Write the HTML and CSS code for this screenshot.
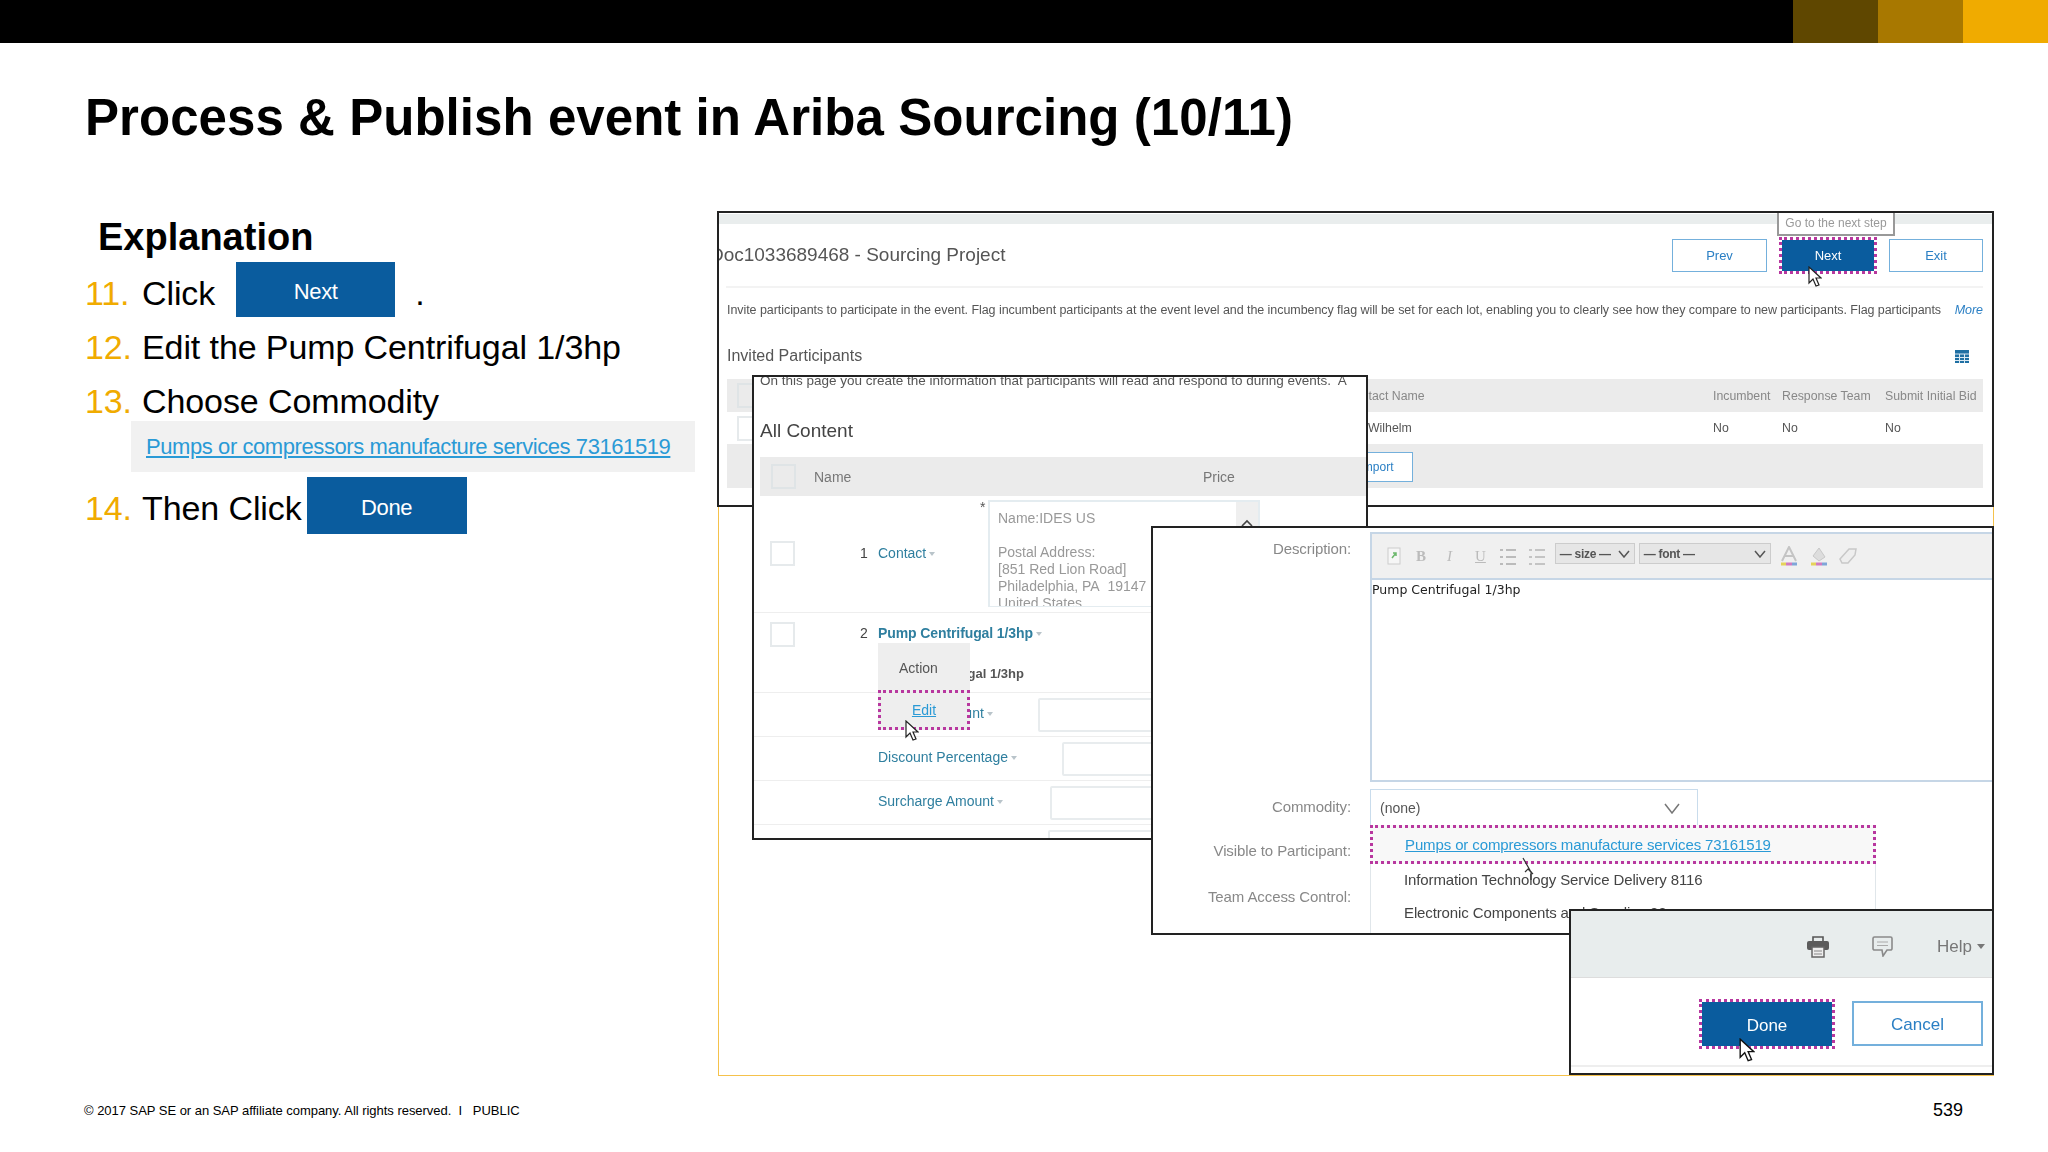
FILE: index.html
```html
<!DOCTYPE html>
<html lang="en">
<head>
    <meta charset="UTF-8">
    <title>Process &amp; Publish event in Ariba Sourcing (10/11)</title>
    <link rel="stylesheet" href="styles.css">
</head>
<body>
    <div class="slide">
        <div class="topbar">
            <div class="topbar-fill"></div>
            <div class="topbar-seg seg-dark"></div>
            <div class="topbar-seg seg-mid"></div>
            <div class="topbar-seg seg-light"></div>
        </div>

        <h1 class="slide-title">Process &amp; Publish event in Ariba Sourcing (10/11)</h1>

        <div class="explain">
            <h2>Explanation</h2>
            <div class="step">
                <span class="step-num">11.</span><span class="step-text">Click</span>
                <span class="step-btn step-btn-next">Next</span><span class="step-dot">.</span>
            </div>
            <div class="step"><span class="step-num">12.</span><span class="step-text">Edit the Pump Centrifugal 1/3hp</span></div>
            <div class="step"><span class="step-num">13.</span><span class="step-text">Choose Commodity</span></div>
            <div class="step-link"><a>Pumps or compressors manufacture services 73161519</a></div>
            <div class="step step-last">
                <span class="step-num">14.</span><span class="step-text">Then Click</span>
                <span class="step-btn step-btn-done">Done</span>
            </div>
        </div>

        <!-- screenshots, stacked like windows -->
        <div class="yellow-frame"></div>

        <div class="window win-project">
            <div class="strip"></div>
            <div class="project-head">
                <div class="project-title">Doc1033689468 - Sourcing Project</div>
                <div class="project-btns">
                    <span class="btn-outline btn-prev">Prev</span>
                    <span class="btn-solid btn-next">Next</span>
                    <span class="btn-outline btn-exit">Exit</span>
                </div>
            </div>
            <div class="project-rule"></div>
            <div class="invite-row">
                <span>Invite participants to participate in the event. Flag incumbent participants at the event level and the incumbency flag will be set for each lot, enabling you to clearly see how they compare to new participants. Flag participants</span>
                <em>More</em>
            </div>
            <div class="invited-head">
                <span>Invited Participants</span>
                <svg width="14" height="13" viewBox="0 0 14 13"><rect width="14" height="13" fill="#1f6fa3"/><path d="M0 4h14M0 7.500h14M0 10.500h14M4.500 4v9M9.500 4v9" stroke="#dbe9f2" stroke-width="1"/></svg>
            </div>
            <div class="part-table">
                <div class="part-row part-header">
                    <span class="part-first"><i class="checkbox"></i></span>
                    <span>Contact Name</span><span>Incumbent</span><span>Response Team</span><span>Submit Initial Bid</span>
                </div>
                <div class="part-row part-body">
                    <span class="part-first"><i class="checkbox"></i></span>
                    <span class="part-name">Wilhelm</span><span>No</span><span>No</span><span>No</span>
                </div>
                <div class="part-foot"><span class="btn-outline btn-import">Import</span></div>
            </div>
            <div class="tooltip">Go to the next step</div>
        </div>

        <div class="window win-content">
            <div class="content-intro">On this page you create the information that participants will read and respond to during events.&nbsp; A</div>
            <div class="content-title">All Content</div>
            <div class="content-header">
                <span class="content-check"><i class="checkbox"></i></span>
                <span class="content-name">Name</span>
                <span>Price</span>
            </div>
            <div class="content-row row-contact">
                <i class="checkbox"></i>
                <span class="row-num">1</span>
                <span class="row-label">Contact<b class="caret"></b></span>
                <span class="row-star">*</span>
                <div class="address">
                    <p>Name:IDES US</p>
                    <p class="address-gap">Postal Address:</p>
                    <p>[851 Red Lion Road]</p>
                    <p>Philadelphia, PA&nbsp; 19147</p>
                    <p>United States</p>
                    <div class="address-scroll">
                        <svg width="12" height="8" viewBox="0 0 12 8"><path d="M1 7l5-5 5 5" fill="none" stroke="#444" stroke-width="1.600"/></svg>
                    </div>
                </div>
            </div>
            <div class="content-row row-pump">
                <i class="checkbox"></i>
                <span class="row-num">2</span>
                <div class="pump-text">
                    <span class="row-label row-label-bold">Pump Centrifugal 1/3hp<b class="caret"></b></span>
                    <span class="pump-sub">Pump Centrifugal 1/3hp</span>
                </div>
            </div>
            <div class="field-row">
                <span class="row-label">Discount Amount<b class="caret"></b></span>
                <span class="field-input input-a"></span>
            </div>
            <div class="field-row">
                <span class="row-label">Discount Percentage<b class="caret"></b></span>
                <span class="field-input input-b"></span>
            </div>
            <div class="field-row">
                <span class="row-label">Surcharge Amount<b class="caret"></b></span>
                <span class="field-input input-c"></span>
            </div>
            <div class="field-row">
                <span class="row-label">Surcharge Percentage</span>
                <span class="field-input input-d"></span>
            </div>
            <div class="action-menu">
                <div class="action-title">Action</div>
                <div class="action-edit"><a>Edit</a></div>
            </div>
        </div>

        <div class="window win-desc">
            <div class="desc-labels">
                <div class="desc-label label-description">Description:</div>
                <div class="desc-label label-commodity">Commodity:</div>
                <div class="desc-label label-visible">Visible to Participant:</div>
                <div class="desc-label label-team">Team Access Control:</div>
            </div>
            <div class="desc-main">
                <div class="editor">
                    <div class="editor-bar">
                        <svg class="tool tool-first" width="14" height="18" viewBox="0 0 14 18"><rect x="1" y="1" width="12" height="16" fill="#f6f6f6" stroke="#ccc"/><path d="M5 11l4-5M6 6h3v3" fill="none" stroke="#6cb86c" stroke-width="1.500"/></svg>
                        <span class="tool tool-b">B</span>
                        <span class="tool tool-i">I</span>
                        <span class="tool tool-u">U</span>
                        <svg class="tool tool-list" width="16" height="24" viewBox="0 0 16 24"><path d="M0 3h3M6 3h10M0 10h3M6 10h10M0 17h3M6 17h10" stroke="#bbb" stroke-width="2"/></svg>
                        <svg class="tool tool-list2" width="16" height="24" viewBox="0 0 16 24"><path d="M0 3h3M6 3h10M0 10h3M6 10h10M0 17h3M6 17h10" stroke="#c4c4c4" stroke-width="2"/></svg>
                        <span class="editor-select select-size">— size —<svg width="12" height="8" viewBox="0 0 12 8"><path d="M1 1l5 6 5-6" fill="none" stroke="#555" stroke-width="1.500"/></svg></span>
                        <span class="editor-select select-font">— font —<svg width="12" height="8" viewBox="0 0 12 8"><path d="M1 1l5 6 5-6" fill="none" stroke="#555" stroke-width="1.500"/></svg></span>
                        <svg class="tool tool-color" width="18" height="20" viewBox="0 0 18 20"><path d="M2 15L9 1l7 14M5 10h8" fill="none" stroke="#c4c4c4" stroke-width="2"/><path d="M1 18h5" stroke="#e5d25a" stroke-width="3"/><path d="M6 18h6" stroke="#d07ac0" stroke-width="3"/><path d="M12 18h5" stroke="#7fa6d8" stroke-width="3"/></svg>
                        <svg class="tool tool-bucket" width="18" height="20" viewBox="0 0 18 20"><path d="M3 10l6-8 6 9-6 4z" fill="#ddd" stroke="#c8c8c8"/><path d="M1 18h5" stroke="#e5d25a" stroke-width="3"/><path d="M6 18h6" stroke="#d07ac0" stroke-width="3"/><path d="M12 18h5" stroke="#7fa6d8" stroke-width="3"/></svg>
                        <svg class="tool tool-eraser" width="18" height="18" viewBox="0 0 18 18"><path d="M1 12L10 2h7l-1 6-7 8H3z" fill="#eee" stroke="#c8c8c8" stroke-width="1.500"/></svg>
                    </div>
                    <div class="editor-body">Pump Centrifugal 1/3hp</div>
                </div>
                <div class="commodity-select">
                    <span>(none)</span>
                    <svg width="16" height="11" viewBox="0 0 16 11"><path d="M1 1l7 9 7-9" fill="none" stroke="#777" stroke-width="1.500"/></svg>
                </div>
                <div class="commodity-list">
                    <div class="commodity-hit"><a>Pumps or compressors manufacture services 73161519</a></div>
                    <div class="commodity-item">Information Technology Service Delivery 8116</div>
                    <div class="commodity-item">Electronic Components and Supplies 32</div>
                </div>
            </div>
        </div>

        <div class="window win-done">
            <div class="done-bar">
                <svg width="22" height="22" viewBox="0 0 22 22"><path d="M6 5V1h10v4" fill="none" stroke="#555" stroke-width="1.600"/><rect x="0" y="5" width="22" height="9" rx="2" fill="#5c5c5c"/><rect x="5" y="11" width="12" height="10" fill="#eee" stroke="#666" stroke-width="1.500"/><path d="M7 15h8M7 18h8" stroke="#888"/></svg>
                <svg class="done-comment" width="21" height="21" viewBox="0 0 21 21"><path d="M2.500 1h16a1.500 1.500 0 0 1 1.500 1.500v10a1.500 1.500 0 0 1-1.500 1.500H15l-4 6-1-6H2.500A1.500 1.500 0 0 1 1 12.500v-10A1.500 1.500 0 0 1 2.500 1z" fill="none" stroke="#8a8a8a" stroke-width="1.600"/><path d="M5 6h11M5 9.500h11" stroke="#aaa"/></svg>
                <span class="done-help">Help<b></b></span>
            </div>
            <div class="done-actions">
                <span class="btn-solid btn-done">Done</span>
                <span class="btn-outline btn-cancel">Cancel</span>
            </div>
        </div>

        <svg class="cursor cursor-next" width="14" height="22" viewBox="0 0 14 22"><path d="M1 1v16l4-4 3 7 3-1-3-7h5z" fill="#fff" stroke="#222" stroke-width="1.200"/></svg>
        <svg class="cursor cursor-edit" width="14" height="22" viewBox="0 0 14 22"><path d="M1 1v16l4-4 3 7 3-1-3-7h5z" fill="#fff" stroke="#222" stroke-width="1.200"/></svg>
        <svg class="cursor cursor-list" width="14" height="24" viewBox="0 0 14 24"><path d="M1 1l8 14M3 15l3-3 5 5M9 14v9" fill="none" stroke="#333" stroke-width="1.200"/></svg>
        <svg class="cursor cursor-done" width="16" height="25" viewBox="0 0 14 22"><path d="M1 1v16l4-4 3 7 3-1-3-7h5z" fill="#fff" stroke="#111" stroke-width="1.200"/></svg>

        <div class="footer">
            <span>© 2017 SAP SE or an SAP affiliate company. All rights reserved.&nbsp; I &nbsp;&nbsp;PUBLIC</span>
            <span class="page-num">539</span>
        </div>
    </div>
</body>
</html>
```
FILE: styles.css
```css
:root {
    --sap-blue: #0a5c9e;
    --link-blue: #2a9ad6;
    --teal-link: #2f7f9f;
    --orange: #f0ab00;
    --outline-blue: #74b0dc;
    --head-gray: #ebebeb;
    --line-gray: #eeeeee;
    --magenta: #b8379f;
}

* {
    box-sizing: border-box;
    margin: 0;
    padding: 0;
}

body {
    background-color: #fff;
    color: #000;
    font-family: "Liberation Sans", Arial, sans-serif;
    overflow: hidden;
}

.slide {
    position: relative;
    width: 2048px;
    height: 1152px;
    overflow: hidden;
    background-color: #fff;
}

/* top bar */
.topbar {
    display: flex;
    height: 43px;
}

.topbar-fill {
    flex: 1;
    background-color: #000;
}

.topbar-seg {
    width: 85px;
}

.seg-dark { background-color: #5f4700; }
.seg-mid { background-color: #a87800; }
.seg-light { background-color: #f0ab00; }

.slide-title {
    height: 66px;
    margin-top: 42px;
    padding-left: 85px;
    font-size: 51px;
    line-height: 66px;
    font-weight: 700;
    letter-spacing: 0.05px;
    white-space: nowrap;
}

/* left column */
.explain {
    margin-top: 64px;
    padding-left: 85px;
    width: 717px;
}

.explain h2 {
    height: 44px;
    padding-left: 13px;
    font-size: 38px;
    line-height: 44px;
    font-weight: 700;
}

.step {
    display: flex;
    align-items: center;
    height: 54px;
    font-size: 34px;
    letter-spacing: -0.1px;
    white-space: nowrap;
}

.explain h2 + .step {
    margin-top: 7px;
}

.step-num {
    width: 57px;
    color: var(--orange);
}

.step-btn {
    display: flex;
    align-items: center;
    justify-content: center;
    background-color: var(--sap-blue);
    color: #fff;
    font-size: 22px;
    letter-spacing: -0.4px;
}

.step-btn-next {
    width: 159px;
    height: 55px;
    margin: 0 0 7px 21px;
    padding-top: 5px;
}

.step-btn-done {
    width: 160px;
    height: 57px;
    margin: 0 0 5px 5px;
    padding-top: 5px;
}

.step-dot {
    margin-left: 20px;
}

.step-link {
    display: flex;
    align-items: center;
    width: 564px;
    height: 51px;
    margin: -7px 0 0 46px;
    padding-left: 15px;
    background-color: #f1f1f1;
    font-size: 22px;
    letter-spacing: -0.42px;
    white-space: nowrap;
}

.step-link a {
    color: var(--link-blue);
    text-decoration: underline;
}

.step-last {
    margin-top: 9px;
}

/* screenshots */
.yellow-frame {
    position: absolute;
    left: 718px;
    top: 505px;
    width: 1276px;
    height: 571px;
    border: 1px solid #f5c24c;
}

.window {
    position: absolute;
    overflow: hidden;
    border: 2px solid #222;
    background-color: #fff;
    color: #555;
    filter: blur(0.35px);
}

.win-project {
    left: 717px;
    top: 211px;
    width: 1277px;
    height: 296px;
}

.win-content {
    left: 752px;
    top: 375px;
    width: 616px;
    height: 465px;
}

.win-desc {
    display: flex;
    left: 1151px;
    top: 526px;
    width: 843px;
    height: 409px;
}

.win-done {
    left: 1569px;
    top: 909px;
    width: 425px;
    height: 166px;
}

.checkbox {
    display: block;
    width: 25px;
    height: 25px;
    border: 2px solid #e6eaec;
    background-color: #fff;
}

.part-header .checkbox,
.content-header .checkbox {
    border-color: #dfe4e6;
    background-color: transparent;
}

.btn-outline,
.btn-solid {
    display: flex;
    align-items: center;
    justify-content: center;
    font-size: 13px;
}

.btn-outline {
    border: 1px solid var(--outline-blue);
    background-color: #fff;
    color: #2a7fc4;
}

.btn-solid {
    background-color: var(--sap-blue);
    background-clip: padding-box;
    border: 3px dotted var(--magenta);
    color: #fff;
}

/* project window */
.strip {
    height: 10px;
    margin-top: 1px;
    background-color: #e9eded;
}

.project-head {
    display: flex;
    align-items: center;
    justify-content: space-between;
    height: 33px;
    margin-top: 15px;
    padding-right: 9px;
}

.project-title {
    margin: -2px 0 0 -9px;
    font-size: 19px;
    letter-spacing: -0.01px;
}

.project-btns {
    display: flex;
    align-items: center;
    gap: 12px;
}

.btn-prev { width: 95px; height: 33px; }
.btn-next { width: 98px; height: 37px; }
.btn-exit { width: 94px; height: 33px; }

.project-rule {
    height: 2px;
    margin: 14px 9px 0 7px;
    background-color: #f3f3f3;
}

.invite-row {
    display: flex;
    justify-content: space-between;
    height: 20px;
    margin-top: 12px;
    padding: 0 9px 0 8px;
    font-size: 12.500px;
    line-height: 20px;
    letter-spacing: -0.06px;
    white-space: nowrap;
}

.invite-row em {
    color: #2a7fc4;
}

.invited-head {
    display: flex;
    align-items: center;
    justify-content: space-between;
    height: 22px;
    margin-top: 25px;
    padding: 0 23px 0 8px;
    font-size: 16px;
}

.part-table {
    margin: 12px 9px 0 8px;
    font-size: 12.300px;
}

.part-row {
    display: grid;
    grid-template-columns: 619px 367px 69px 103px 1fr;
    align-items: center;
}

.part-header {
    height: 33px;
    background-color: var(--head-gray);
    color: #888;
}

.part-body {
    height: 32px;
}

.part-first {
    padding-left: 10px;
}

.part-name {
    padding-left: 22px;
}

.part-foot {
    height: 44px;
    padding: 8px 0 0 613px;
    background-color: var(--head-gray);
}

.btn-import {
    width: 73px;
    height: 30px;
    font-size: 12px;
}

.tooltip {
    position: absolute;
    left: 1058px;
    top: -3px;
    display: flex;
    align-items: center;
    justify-content: center;
    width: 118px;
    height: 26px;
    border: 2px solid #999;
    background-color: #fff;
    color: #999;
    font-size: 12px;
}

/* all content window */
.content-intro {
    height: 16px;
    margin-top: -4px;
    padding-left: 6px;
    font-size: 13.500px;
    line-height: 16px;
    white-space: nowrap;
}

.content-title {
    height: 26px;
    margin-top: 29px;
    padding-left: 6px;
    color: #444;
    font-size: 19px;
    line-height: 26px;
}

.content-header {
    display: grid;
    grid-template-columns: 54px 389px 1fr;
    align-items: center;
    height: 39px;
    margin: 13px 0 0 6px;
    background-color: var(--head-gray);
    color: #777;
    font-size: 14px;
}

.content-check {
    padding-left: 11px;
}

.content-row {
    position: relative;
    display: flex;
    align-items: flex-start;
    border-bottom: 1px solid var(--line-gray);
    font-size: 14px;
}

.content-row .checkbox {
    flex: none;
    margin-left: 16px;
}

.row-num {
    width: 18px;
    margin-left: 65px;
    color: #444;
}

.row-label {
    color: var(--teal-link);
    white-space: nowrap;
}

.row-label-bold {
    font-weight: 700;
    letter-spacing: -0.1px;
}

.caret {
    display: inline-block;
    margin-left: 3px;
    border-top: 4px solid #b9c4ca;
    border-left: 3px solid transparent;
    border-right: 3px solid transparent;
    vertical-align: middle;
}

.row-contact {
    height: 117px;
}

.row-contact .checkbox { margin-top: 45px; }
.row-contact .row-num { margin-top: 49px; }
.row-contact .row-label { width: 102px; margin-top: 49px; }

.row-star {
    width: 8px;
    margin-top: 3px;
}

.address {
    position: relative;
    flex: none;
    width: 272px;
    height: 107px;
    margin-top: 4px;
    padding: 8px 0 0 8px;
    overflow: hidden;
    border: 2px solid #e4ecf0;
    border-bottom-width: 1px;
    color: #999;
    line-height: 17px;
}

.address-gap {
    margin-top: 17px;
}

.address-scroll {
    position: absolute;
    top: 0;
    right: 0;
    bottom: 0;
    width: 22px;
    padding: 17px 0 0 5px;
    background-color: #efefef;
}

.address-scroll svg {
    display: block;
}

.row-pump {
    height: 80px;
}

.row-pump .checkbox { margin-top: 9px; }
.row-pump .row-num { margin-top: 12px; }

.pump-text {
    display: flex;
    flex-direction: column;
    gap: 25px;
    margin-top: 12px;
}

.pump-sub {
    color: #555;
    font-weight: 700;
    font-size: 13px;
}

.field-row {
    display: flex;
    align-items: center;
    height: 44px;
    padding-left: 124px;
    border-bottom: 1px solid var(--line-gray);
    font-size: 14px;
}

.field-row .row-label {
    margin-top: -4px;
}

.field-input {
    flex: none;
    width: 200px;
    height: 34px;
    border: 2px solid #e8ecee;
    border-radius: 2px;
}

.input-a { margin-left: 45px; }
.input-b { margin-left: 45px; }
.input-c { margin-left: 47px; }
.input-d { margin-left: 30px; }

.action-menu {
    position: absolute;
    left: 124px;
    top: 266px;
    width: 92px;
    height: 87px;
    background-color: #eee;
    font-size: 14px;
}

.action-title {
    height: 48px;
    padding: 17px 0 0 21px;
    color: #555;
}

.action-edit {
    display: flex;
    align-items: center;
    justify-content: center;
    height: 40px;
    margin-top: -1px;
    border: 3px dotted var(--magenta);
}

.action-edit a {
    color: var(--link-blue);
    text-decoration: underline;
}

/* description window */
.desc-labels {
    flex: none;
    width: 198px;
    color: #888;
    font-size: 15px;
    letter-spacing: -0.1px;
    text-align: right;
}

.desc-label {
    height: 20px;
    line-height: 20px;
}

.label-description { margin-top: 11px; }
.label-commodity { margin-top: 238px; }
.label-visible { margin-top: 24px; }
.label-team { margin-top: 26px; }

.desc-main {
    flex: 1;
    margin: 4px 0 0 19px;
}

.editor {
    height: 250px;
    border: 2px solid #c6d6e6;
    border-right: none;
}

.editor-bar {
    display: flex;
    align-items: center;
    height: 46px;
    padding-left: 15px;
    border-bottom: 2px solid #c6d6e6;
    background-color: #f0f0f0;
    color: #bbb;
}

.tool {
    flex: none;
}

.tool-b {
    margin-left: 15px;
    font-family: "Liberation Serif", serif;
    font-size: 15px;
    font-weight: 700;
}

.tool-i {
    margin-left: 21px;
    font-family: "Liberation Serif", serif;
    font-size: 15px;
    font-style: italic;
}

.tool-u {
    margin-left: 23px;
    font-family: "Liberation Serif", serif;
    font-size: 15px;
    text-decoration: underline;
}

.tool-list { margin: 6px 0 0 14px; }
.tool-list2 { margin: 6px 0 0 13px; }

.editor-select {
    display: flex;
    align-items: center;
    justify-content: space-between;
    height: 21px;
    margin-top: -5px;
    padding: 0 4px;
    border: 1px solid #ccc;
    background-color: #e6e6e6;
    color: #555;
    font-size: 12px;
    font-weight: 700;
    letter-spacing: -0.3px;
}

.select-size { width: 80px; margin-left: 10px; }
.select-font { width: 132px; margin-left: 4px; }

.tool-color { margin-left: 9px; }
.tool-bucket { margin-left: 12px; }
.tool-eraser { margin-left: 11px; }

.editor-body {
    padding: 1px 0 0;
    color: #222;
    font-family: "DejaVu Sans", sans-serif;
    font-size: 12.500px;
    line-height: 18px;
}

.commodity-select {
    display: flex;
    align-items: center;
    justify-content: space-between;
    width: 328px;
    height: 37px;
    margin-top: 7px;
    padding: 0 17px 0 9px;
    border: 1px solid #c9dcec;
    border-bottom: none;
    color: #555;
    font-size: 14px;
}

.commodity-list {
    width: 506px;
    height: 120px;
    border-left: 1px solid #e0e6ea;
    border-right: 1px solid #e0e6ea;
    color: #444;
    font-size: 15px;
    letter-spacing: -0.12px;
    white-space: nowrap;
}

.commodity-hit {
    display: flex;
    align-items: center;
    height: 39px;
    margin: -1px -1px 0;
    padding-left: 32px;
    border: 3px dotted var(--magenta);
    background-color: #f8f8f8;
}

.commodity-hit a {
    color: var(--link-blue);
    text-decoration: underline;
}

.commodity-item {
    height: 34px;
    padding: 10px 0 0 33px;
    line-height: 18px;
}

.commodity-hit + .commodity-item {
    height: 30px;
    padding-top: 7px;
}

/* done window */
.done-bar {
    display: flex;
    align-items: center;
    justify-content: flex-end;
    height: 67px;
    padding: 5px 7px 0 0;
    border-bottom: 1px solid #ddd;
    background-color: #e8eded;
}

.done-comment {
    margin-left: 43px;
}

.done-help {
    display: flex;
    align-items: center;
    margin-left: 44px;
    color: #777;
    font-size: 17px;
}

.done-help b {
    margin-left: 5px;
    border-top: 5px solid #777;
    border-left: 4px solid transparent;
    border-right: 4px solid transparent;
}

.done-actions {
    display: flex;
    align-items: flex-start;
    justify-content: flex-end;
    gap: 17px;
    height: 89px;
    padding: 21px 9px 0 0;
    border-bottom: 2px solid #eee;
}

.btn-done {
    width: 136px;
    height: 50px;
    padding-top: 3px;
    font-size: 17px;
}

.btn-cancel {
    width: 131px;
    height: 45px;
    margin-top: 2px;
    padding-top: 2px;
    border-width: 2px;
    font-size: 17px;
}

/* cursors sit on top of everything */
.cursor {
    position: absolute;
}

.cursor-next { left: 1808px; top: 266px; }
.cursor-edit { left: 905px; top: 720px; }
.cursor-list { left: 1522px; top: 857px; }
.cursor-done { left: 1739px; top: 1038px; }

.footer {
    position: absolute;
    left: 84px;
    right: 85px;
    top: 1100px;
    display: flex;
    align-items: center;
    justify-content: space-between;
    height: 20px;
    font-size: 13px;
    letter-spacing: -0.03px;
}

.page-num {
    font-size: 18px;
}
```
